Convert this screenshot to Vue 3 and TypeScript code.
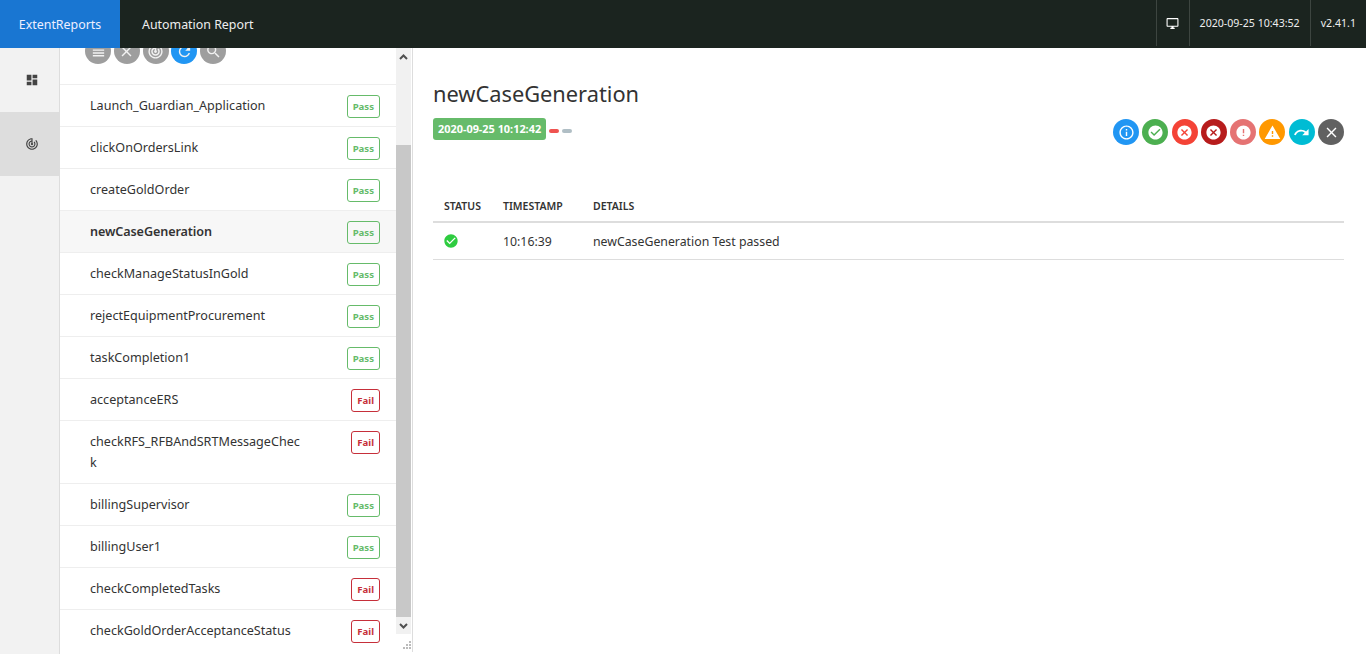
<script setup lang="ts">
type Status = 'pass' | 'fail'

type TestRow = {
  name: string
  status: Status
  active?: boolean
}

const tests: TestRow[] = [
  { name: 'Launch_Guardian_Application', status: 'pass' },
  { name: 'clickOnOrdersLink', status: 'pass' },
  { name: 'createGoldOrder', status: 'pass' },
  { name: 'newCaseGeneration', status: 'pass', active: true },
  { name: 'checkManageStatusInGold', status: 'pass' },
  { name: 'rejectEquipmentProcurement', status: 'pass' },
  { name: 'taskCompletion1', status: 'pass' },
  { name: 'acceptanceERS', status: 'fail' },
  { name: 'checkRFS_RFBAndSRTMessageCheck', status: 'fail' },
  { name: 'billingSupervisor', status: 'pass' },
  { name: 'billingUser1', status: 'pass' },
  { name: 'checkCompletedTasks', status: 'fail' },
  { name: 'checkGoldOrderAcceptanceStatus', status: 'fail' },
]

const trackChanges =
  'M19.07 4.93l-1.41 1.41C19.1 7.79 20 9.79 20 12c0 4.42-3.58 8-8 8s-8-3.58-8-8c0-4.08 3.05-7.44 7-7.93v2.02C8.16 6.57 6 9.03 6 12c0 3.31 2.69 6 6 6s6-2.69 6-6c0-1.66-.67-3.16-1.76-4.24l-1.41 1.41C15.55 9.9 16 10.89 16 12c0 2.21-1.79 4-4 4s-4-1.79-4-4c0-1.86 1.28-3.41 3-3.86v2.14c-.6.35-1 .98-1 1.72 0 1.1.9 2 2 2s2-.9 2-2c0-.74-.4-1.38-1-1.72V2h-1C6.48 2 2 6.48 2 12s4.48 10 10 10 10-4.48 10-10c0-2.76-1.12-5.26-2.93-7.07z'
const clearIcon =
  'M19 6.41L17.59 5 12 10.59 6.41 5 5 6.41 10.59 12 5 17.59 6.41 19 12 13.41 17.59 19 19 17.59 13.41 12z'
const checkCircle =
  'M12 2C6.48 2 2 6.48 2 12s4.48 10 10 10 10-4.48 10-10S17.52 2 12 2zm-2 15l-5-5 1.41-1.41L10 14.17l7.59-7.59L19 8l-9 9z'
const cancel =
  'M12 2C6.47 2 2 6.47 2 12s4.47 10 10 10 10-4.47 10-10S17.53 2 12 2zm5 13.59L15.59 17 12 13.41 8.41 17 7 15.59 10.59 12 7 8.41 8.41 7 12 10.59 15.59 7 17 8.41 13.41 12 17 15.59z'

const toolIcons = [
  { d: 'M4 15h16v-2H4v2zm0 4h16v-2H4v2zm0-8h16V9H4v2zm0-6v2h16V5H4z', on: false },
  { d: clearIcon, on: false },
  { d: trackChanges, on: false },
  {
    d: 'M17.65 6.35C16.2 4.9 14.21 4 12 4c-4.42 0-7.99 3.58-7.99 8s3.57 8 7.99 8c3.73 0 6.84-2.55 7.73-6h-2.08c-.82 2.33-3.04 4-5.65 4-3.31 0-6-2.69-6-6s2.69-6 6-6c1.66 0 3.14.69 4.22 1.78L13 11h7V4l-2.35 2.35z',
    on: true,
  },
  {
    d: 'M15.5 14h-.79l-.28-.27C15.41 12.59 16 11.11 16 9.5 16 5.91 13.09 3 9.5 3S3 5.91 3 9.5 5.91 16 9.5 16c1.61 0 3.09-.59 4.23-1.57l.27.28v.79l5 4.99L20.49 19l-4.99-5zm-6 0C7.01 14 5 11.99 5 9.5S7.01 5 9.500 5 14 7.01 14 9.500 11.99 14 9.500 14z',
    on: false,
  },
]

const filters = [
  {
    kind: 'info',
    d: 'M11 17h2v-6h-2v6zm1-15C6.48 2 2 6.48 2 12s4.48 10 10 10 10-4.48 10-10S17.52 2 12 2zm0 18c-4.41 0-8-3.59-8-8s3.59-8 8-8 8 3.59 8 8-3.59 8-8 8zM11 9h2V7h-2v2z',
  },
  { kind: 'pass', d: checkCircle },
  { kind: 'fail', d: cancel },
  { kind: 'fatal', d: cancel },
  {
    kind: 'error',
    d: 'M12 2C6.48 2 2 6.48 2 12s4.48 10 10 10 10-4.48 10-10S17.52 2 12 2zm1 15h-2v-2h2v2zm0-4h-2V7h2v6z',
  },
  { kind: 'warning', d: 'M1 21h22L12 2 1 21zm12-3h-2v-2h2v2zm0-4h-2v-4h2v4z' },
  {
    kind: 'skip',
    d: 'M18.4 10.6C16.55 8.99 14.15 8 11.5 8c-4.65 0-8.58 3.03-9.96 7.22L3.9 16c1.05-3.19 4.05-5.5 7.6-5.5 1.95 0 3.73.72 5.12 1.88L13 16h9V7l-3.6 3.6z',
  },
  { kind: 'clear', d: clearIcon },
]
</script>

<template>
  <div class="page">
    <header class="topbar">
      <div class="brand">ExtentReports</div>
      <div class="report-name">Automation Report</div>
      <div class="top-right">
        <div class="top-cell icon-cell">
          <svg width="13" height="13" viewBox="0 0 24 24" fill="#fff">
            <path d="M21 2H3c-1.100 0-2 .9-2 2v12c0 1.100.9 2 2 2h7v2H8v2h8v-2h-2v-2h7c1.100 0 2-.9 2-2V4c0-1.100-.9-2-2-2zm0 14H3V4h18v12z" />
          </svg>
        </div>
        <div class="top-cell">2020-09-25 10:43:52</div>
        <div class="top-cell">v2.41.1</div>
      </div>
    </header>

    <div class="body">
      <nav class="side">
        <div class="side-item">
          <svg width="14" height="14" viewBox="0 0 24 24" fill="#444">
            <path d="M3 13h8V3H3v10zm0 8h8v-6H3v6zm10 0h8V11h-8v10zm0-18v6h8V3h-8z" />
          </svg>
        </div>
        <div class="side-item on">
          <svg width="14" height="14" viewBox="0 0 24 24" fill="#444">
            <path :d="trackChanges" />
          </svg>
        </div>
      </nav>

      <section class="list-panel">
        <div class="list-scroll">
          <div class="tools">
            <span v-for="(icon, i) in toolIcons" :key="i" class="tool" :class="{ blue: icon.on }">
              <svg width="17" height="17" viewBox="0 0 24 24" fill="#f2f2f2"><path :d="icon.d" /></svg>
            </span>
          </div>
          <ul class="tests">
            <li v-for="t in tests" :key="t.name" class="test" :class="{ active: t.active }">
              <span class="test-name">{{ t.name }}</span>
              <span class="badge" :class="t.status">{{ t.status === 'pass' ? 'Pass' : 'Fail' }}</span>
            </li>
          </ul>
        </div>
        <div class="scrollbar">
          <div class="arrow">
            <svg width="9" height="6" viewBox="0 0 9 6" fill="none" stroke="#505050" stroke-width="2"><path d="M1 5l3.500 -3.500L8 5" /></svg>
          </div>
          <div class="track"><div class="thumb" /></div>
          <div class="arrow">
            <svg width="9" height="6" viewBox="0 0 9 6" fill="none" stroke="#505050" stroke-width="2"><path d="M1 1l3.500 3.500L8 1" /></svg>
          </div>
          <div class="grip">
            <svg width="9" height="9" viewBox="0 0 9 9" fill="#bbb"><path d="M7 0h2v2H7zM4 3h2v2H4zM7 3h2v2H7zM1 6h2v2H1zM4 6h2v2H4zM7 6h2v2H7z" /></svg>
          </div>
        </div>
      </section>

      <main class="detail">
        <h1 class="title">newCaseGeneration</h1>
        <div class="meta">
          <div class="meta-left">
            <span class="stamp">2020-09-25 10:12:42</span>
            <span class="dash red" />
            <span class="dash grey" />
          </div>
          <div class="filters">
            <span v-for="f in filters" :key="f.kind" class="filter" :class="f.kind">
              <svg width="17" height="17" viewBox="0 0 24 24" fill="#fff"><path :d="f.d" /></svg>
            </span>
          </div>
        </div>

        <table class="log">
          <thead>
            <tr>
              <th class="c-status">STATUS</th>
              <th class="c-time">TIMESTAMP</th>
              <th>DETAILS</th>
            </tr>
          </thead>
          <tbody>
            <tr>
              <td class="c-status">
                <svg class="ok" width="16" height="16" viewBox="0 0 24 24" fill="#2ecc40"><path :d="checkCircle" /></svg>
              </td>
              <td class="c-time">10:16:39</td>
              <td>newCaseGeneration Test passed</td>
            </tr>
          </tbody>
        </table>
      </main>
    </div>
  </div>
</template>

<style>
html,
body {
  margin: 0;
  background: #fff;
  overflow: hidden;
}
</style>

<style scoped>
.page {
  width: 1366px;
  height: 654px;
  display: flex;
  flex-direction: column;
  overflow: hidden;
  font-family: 'Noto Sans', 'Open Sans', sans-serif;
  font-size: 12.6px;
  color: #333;
}

.topbar {
  height: 48px;
  flex: 0 0 48px;
  display: flex;
  align-items: stretch;
  background: #1b241f;
  color: #fff;
  position: relative;
  z-index: 2;
}

.brand {
  width: 120px;
  background: #1976d2;
  display: flex;
  align-items: center;
  justify-content: center;
  font-size: 12.4px;
  color: #eef;
}

.report-name {
  display: flex;
  align-items: center;
  padding-left: 22px;
  font-size: 12.4px;
  color: #eee;
}

.top-right {
  margin-left: auto;
  display: flex;
  align-items: stretch;
  font-size: 10.6px;
  color: #eee;
}

.top-cell {
  display: flex;
  align-items: center;
  height: 46px;
  border-left: 1px solid #3d4540;
  padding: 0 10px;
}

.icon-cell {
  width: 33px;
  box-sizing: border-box;
  justify-content: center;
  padding: 0;
}

.body {
  flex: 1;
  display: flex;
  min-height: 0;
}

.side {
  width: 59px;
  flex: 0 0 59px;
  background: #f2f2f2;
  border-right: 1px solid #ddd;
}

.side-item {
  height: 64px;
  box-sizing: border-box;
  padding-left: 4px;
  display: flex;
  align-items: center;
  justify-content: center;
}

.side-item.on {
  background: #ddd;
}

.list-panel {
  width: 352px;
  flex: 0 0 352px;
  height: 604px;
  display: flex;
  border-right: 1px solid #ddd;
  overflow: hidden;
}

.list-scroll {
  width: 336px;
  flex: 0 0 336px;
  overflow: hidden;
}

.tools {
  height: 36px;
  padding-left: 25px;
  display: flex;
  gap: 2.8px;
  align-items: flex-start;
}

.tool {
  width: 26px;
  height: 26px;
  margin-top: -10px;
  border-radius: 50%;
  background: #9e9e9e;
  display: flex;
  align-items: center;
  justify-content: center;
  flex: 0 0 26px;
}

.tool.blue {
  background: #2196f3;
}

.tests {
  list-style: none;
  margin: 0;
  padding: 0;
}

.test {
  min-height: 41px;
  display: flex;
  align-items: flex-start;
  justify-content: space-between;
  padding-left: 30px;
  padding-right: 16px;
  border-top: 1px solid #eee;
}

.test.active {
  background: #f7f7f7;
}

.test.active .test-name {
  font-weight: 600;
  letter-spacing: -0.1px;
}

.test-name {
  width: 215px;
  padding-top: 10px;
  padding-bottom: 10px;
  line-height: 21px;
  word-break: break-all;
  color: #333;
}

.badge {
  margin-top: 10px;
  height: 21px;
  line-height: 21px;
  padding: 0 5px;
  border-radius: 3px;
  font-size: 9.6px;
  font-weight: 700;
  border: 1px solid;
}

.badge.pass {
  color: #66bb6a;
  border-color: #66bb6a;
}

.badge.fail {
  color: #c62f3a;
  border-color: #c62f3a;
}

.scrollbar {
  width: 15px;
  flex: 0 0 15px;
  margin-right: 1px;
  display: flex;
  flex-direction: column;
  background: #f1f1f1;
}

.arrow {
  height: 17px;
  flex: 0 0 17px;
  display: flex;
  align-items: center;
  justify-content: center;
}

.track {
  flex: 1;
  padding-top: 80px;
}

.thumb {
  height: 472px;
  background: #c8c8c8;
}

.grip {
  height: 19px;
  flex: 0 0 19px;
  background: #fff;
  display: flex;
  align-items: flex-end;
  justify-content: flex-end;
  padding-bottom: 3px;
  box-sizing: border-box;
}

.detail {
  flex: 1;
  min-width: 0;
  padding: 30px 22px 0 20px;
}

.title {
  margin: 0;
  font-size: 21.8px;
  line-height: 32px;
  font-weight: 400;
  color: #333;
}

.meta {
  display: flex;
  justify-content: space-between;
  align-items: flex-start;
  margin-top: 8px;
}

.meta-left {
  display: flex;
  align-items: center;
}

.stamp {
  height: 22px;
  line-height: 22px;
  padding: 0 5px;
  border-radius: 3px;
  background: #66bb6a;
  color: #fff;
  font-size: 10.9px;
  font-weight: 700;
}

.dash {
  width: 10px;
  height: 4px;
  border-radius: 2px;
  margin-left: 3px;
  margin-top: 3px;
}

.dash.red {
  background: #ef5350;
}

.dash.grey {
  background: #b0bec5;
}

.filters {
  display: flex;
  gap: 3.28px;
  margin-top: 1px;
}

.filter {
  width: 26px;
  height: 26px;
  flex: 0 0 26px;
  border-radius: 50%;
  display: flex;
  align-items: center;
  justify-content: center;
}

.filter.info {
  background: #2196f3;
}

.filter.pass {
  background: #4caf50;
}

.filter.fail {
  background: #f44336;
}

.filter.fatal {
  background: #b71c1c;
}

.filter.error {
  background: #e57373;
}

.filter.warning {
  background: #ff9800;
}

.filter.skip {
  background: #00bcd4;
}

.filter.clear {
  background: #616161;
}

.log {
  width: 100%;
  margin-top: 46px;
  border-collapse: collapse;
}

.log th {
  text-align: left;
  font-size: 10.5px;
  font-weight: 600;
  height: 30px;
  padding: 0 10px;
  border-bottom: 2px solid #ddd;
}

.log th.c-status {
  width: 39px;
  padding-left: 11px;
}

.log td {
  height: 36px;
  padding: 0 10px;
  font-size: 12.3px;
  border-bottom: 1px solid #ddd;
}

.c-status {
  width: 40px;
}

.c-time {
  width: 70px;
}

.ok {
  display: block;
}
</style>
